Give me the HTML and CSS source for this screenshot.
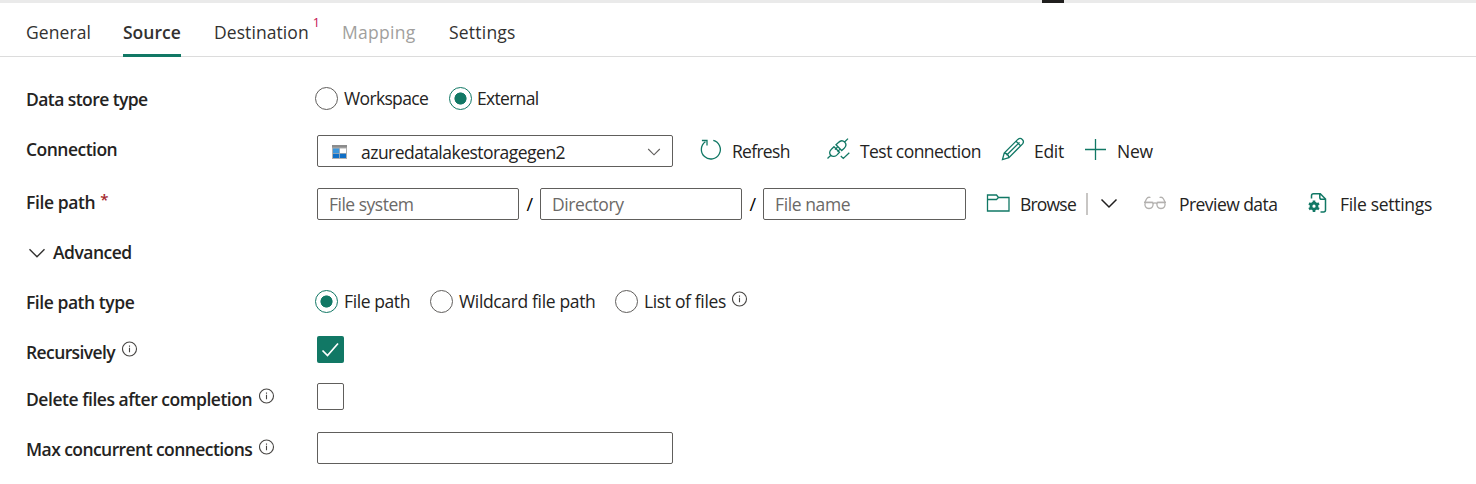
FILE: index.html
```html
<!DOCTYPE html>
<html lang="en">
<head>
<meta charset="utf-8">
<title>Copy data – Source</title>
<link rel="stylesheet" href="styles.css">
</head>
<body>
<div class="splitter"><span class="splitter-grip"></span></div>
<nav class="tabs">
  <a class="tab t-general">General</a>
  <a class="tab t-source active">Source</a>
  <a class="tab t-destination">Destination<sup class="tab-badge">1</sup></a>
  <a class="tab t-mapping disabled">Mapping</a>
  <a class="tab t-settings">Settings</a>
</nav>
<main class="form">
  <div class="row r-store">
    <div class="label"><span class="l-store">Data store type</span></div>
    <div class="radios">
      <label class="radio w-workspace"><i class="dot"></i><span>Workspace</span></label>
      <label class="radio w-external"><i class="dot on"></i><span>External</span></label>
    </div>
  </div>

  <div class="row r-conn">
    <div class="label up"><span class="l-conn">Connection</span></div>
    <div class="box select">
      <svg class="store-icon" width="15" height="14" viewBox="0 0 15 14"><path fill="#b0b0b0" d="M0 0h15v14H0z"/><path fill="#8c8c8c" d="M0 0h15v2.500H0z"/><path fill="#3a96dd" d="M1 3.500h6.200V8H1z"/><path fill="#fff" d="M8 3.500h6V8H8z"/><path fill="#0f6fc6" d="M1 8.700h6.200V13H1zM8 8.700h6V13H8z"/></svg>
      <span class="select-text">azuredatalakestoragegen2</span>
      <svg class="select-chevron" width="14" height="8" viewBox="0 0 14 8"><path d="M1.200 1 7 6.800 12.800 1" fill="none" stroke="#605e5c" stroke-width="1.100"/></svg>
    </div>
    <div class="commands">
      <span class="cmd c-refresh"><svg width="24" height="24" viewBox="0 0 24 24"><path d="M14.300 3.300A9.500 9.500 0 1 1 6.400 4.700M2.900 3.500H8V8.500" /></svg><span>Refresh</span></span>
      <span class="cmd c-test"><svg width="24" height="24" viewBox="0 0 24 24"><path d="M1.500 21.500 4.800 18.300M18.600 5 22 1.600M8 9.700 13.500 15.300 11.300 17.600C9.200 19.700 6.600 20.100 4.800 18.300 3 16.500 3.400 14 5.400 12.200ZM10 7.700 12.400 5.500C14.400 3.500 16.800 3.200 18.600 5 20.400 6.800 20.200 9.200 18.200 11.200L15.700 13.500ZM9 12.600 11.400 10.200M11.300 14.900 13.800 12.400M14.800 19 17.300 21.400 23.300 15.800"/></svg><span>Test connection</span></span>
      <span class="cmd c-edit"><svg width="24" height="24" viewBox="0 0 24 24"><path d="M1.500 22.500 3.200 16 16.800 2.400c3.200-2.700 7.200 1.300 4.800 4.500L7.900 20.600ZM3.200 16c2.600.3 4.300 2 4.700 4.600M5.500 18.300 18.500 5.400M15 4.200 19.800 9"/></svg><span>Edit</span></span>
      <span class="cmd c-new"><svg width="24" height="24" viewBox="0 0 24 24"><path d="M1 12.500h21M11.500 2v21"/></svg><span>New</span></span>
    </div>
  </div>

  <div class="row r-path">
    <div class="label up"><span class="l-path">File path</span><b class="required">*</b></div>
    <div class="paths">
      <div class="box path-input"><span class="p-system">File system</span></div><span class="slash">/</span>
      <div class="box path-input"><span class="p-dir">Directory</span></div><span class="slash">/</span>
      <div class="box path-input last"><span class="p-name">File name</span></div>
    </div>
    <div class="commands">
      <span class="cmd c-browse"><svg width="24" height="24" viewBox="0 0 24 24"><path d="M1.500 20V4h9l2 2.500h10.500V20ZM1.500 8.500h9l2-2"/></svg><span>Browse</span></span>
      <span class="divider"></span>
      <svg class="browse-chevron" width="18" height="11" viewBox="0 0 18 11"><path d="M1.500 1.500 9 9l7.500-7.500" fill="none" stroke="#201f1e" stroke-width="1.500"/></svg>
      <span class="cmd c-preview"><svg class="muted" width="24" height="24" viewBox="0 0 24 24"><path d="M7.500 6.500C5.500 5.800 4.300 6.500 3.500 8L2 11M16.500 6.500C18.500 5.800 19.700 6.500 20.500 8L22 11M1 11.300h8.500M14.500 11.300H23M10 12.800c1.200-1.300 2.800-1.300 4 0"/><path d="M2.200 11.500h7.600c1 3.500-.8 6-3.800 6s-4.800-2.500-3.800-6ZM14.200 11.500h7.600c1 3.500-.8 6-3.800 6s-4.800-2.500-3.800-6Z"/></svg><span>Preview data</span></span>
      <span class="cmd c-files"><svg width="24" height="24" viewBox="0 0 24 24"><path stroke-width="1.500" d="M4.500 7.500V4.800Q4.500 2.800 6.500 2.800h6.800l5.200 5.200V19q0 2-2 2H13.500M12.800 2.800V6.500q0 1.800 1.800 1.800H18.500"/><circle cx="7" cy="15.200" r="3" stroke-width="2.800"/><path stroke-width="2.600" d="M7 9.500v2.500M7 18.400v2.500M2 12.300l2.300 1.300M9.700 16.800l2.300 1.300M12 12.300l-2.300 1.300M4.300 16.800 2 18.100"/></svg><span>File settings</span></span>
    </div>
  </div>

  <div class="row r-adv">
    <svg class="adv-chevron" width="18" height="11" viewBox="0 0 18 11"><path d="M1.500 1.200 9 8.800l7.500-7.600" fill="none" stroke="#323130" stroke-width="1.400"/></svg>
    <span class="advanced">Advanced</span>
  </div>

  <div class="row r-type">
    <div class="label"><span class="l-type">File path type</span></div>
    <div class="radios">
      <label class="radio w-file"><i class="dot on"></i><span>File path</span></label>
      <label class="radio w-wild"><i class="dot"></i><span>Wildcard file path</span></label>
      <label class="radio w-list"><i class="dot"></i><span>List of files</span></label>
      <svg class="info" width="16" height="16" viewBox="0 0 16 16"><circle cx="7.500" cy="8" r="7"/><path d="M7.500 6.800V11.300M7.500 4.500v1.200"/></svg>
    </div>
  </div>

  <div class="row r-rec">
    <div class="label down"><span class="l-rec">Recursively</span><svg class="info" width="16" height="16" viewBox="0 0 16 16"><circle cx="7.500" cy="8" r="7"/><path d="M7.500 6.800V11.300M7.500 4.500v1.200"/></svg></div>
    <span class="check on"><svg width="27" height="27" viewBox="0 0 27 27"><path d="M5.500 14.500 10.500 19.500 21 7.500" fill="none" stroke="#fff" stroke-width="1.700"/></svg></span>
  </div>

  <div class="row r-del">
    <div class="label down"><span class="l-del">Delete files after completion</span><svg class="info" width="16" height="16" viewBox="0 0 16 16"><circle cx="7.500" cy="8" r="7"/><path d="M7.500 6.800V11.300M7.500 4.500v1.200"/></svg></div>
    <span class="check"></span>
  </div>

  <div class="row r-max">
    <div class="label down less"><span class="l-max">Max concurrent connections</span><svg class="info" width="16" height="16" viewBox="0 0 16 16"><circle cx="7.500" cy="8" r="7"/><path d="M7.500 6.800V11.300M7.500 4.500v1.200"/></svg></div>
    <div class="box wide"></div>
  </div>
</main>
</body>
</html>
```
FILE: styles.css
```css
* { box-sizing: border-box; }
body {
  margin: 0;
  background: #fff;
  color: #242322;
  font: 17.500px/24px "Open Sans", "Noto Sans", sans-serif;
  letter-spacing: -0.4px;
  white-space: nowrap;
  overflow: hidden;
}
svg { display: block; flex: none; }

.splitter { height: 3px; background: #eaeaea; padding-left: 1042px; }
.splitter-grip { display: block; width: 22px; height: 3px; background: #201f1e; }

.tabs { display: flex; height: 54px; padding-left: 26px; border-bottom: 1px solid #dcdcdc; }
.tab { height: 54px; padding-top: 17px; color: #323130; flex: none; letter-spacing: 0.08px; }
.t-general { width: 97px; }
.t-source { width: 58px; margin-right: 33px; }
.t-destination { width: 128px; }
.t-mapping { width: 107px; letter-spacing: 0.3px; }
.t-settings { letter-spacing: 0.22px; }
.tab.active { font-weight: 600; border-bottom: 3px solid #117865; letter-spacing: 0; }
.tab.disabled { color: #a19f9d; }
.tab-badge { font-size: 12.500px; line-height: 0; color: #c50f4f; margin-left: 4px; vertical-align: 12px; }

.form { padding: 18px 0 0 26px; }
.row { display: flex; align-items: center; }
.r-store { height: 50px; }
.r-conn { height: 52px; }
.r-path { height: 54px; }
.r-adv { height: 44px; }
.r-type { height: 54px; }
.r-rec { height: 41px; }
.r-del { height: 53px; }
.r-max { height: 50px; }

.label { display: flex; flex: none; width: 291px; font-weight: 600; letter-spacing: -0.52px; }
.label.up { padding-bottom: 4px; }
.label.down { padding-top: 5px; }
.label.less { padding-top: 2px; }
.r-store .label { padding-bottom: 2px; letter-spacing: -0.57px; }
.r-type .label { letter-spacing: -0.45px; }
.l-path { letter-spacing: -0.4px; }
.l-rec { letter-spacing: -0.6px; }
.l-del { letter-spacing: -0.47px; }
.l-max { letter-spacing: -0.57px; }
.required { color: #a4262c; font-size: 15px; font-weight: 600; margin-left: 5px; line-height: 19px; }
.info { fill: none; stroke: #484644; stroke-width: 1.1; margin: 1px 0 0 7px; }
.r-max .info { margin-top: 2px; }

.radios { display: flex; margin-left: -2px; padding-bottom: 1px; }
.r-store .radios { padding-bottom: 3px; }
.radio { display: flex; align-items: center; gap: 6px; flex: none; line-height: 23px; letter-spacing: -0.35px; }
.dot { width: 23px; height: 23px; flex: none; border: 1px solid #605e5c; border-radius: 50%; }
.dot.on { border-color: #117865; background: radial-gradient(circle, #117865 5.700px, transparent 6.400px); }
.w-workspace { width: 134px; letter-spacing: -0.65px; }
.w-external { gap: 5px; letter-spacing: -0.7px; }
.w-file { width: 115px; letter-spacing: -0.4px; }
.w-wild { width: 185px; }
.w-list { width: 110px; }

.box { display: flex; align-items: center; flex: none; height: 32px; border: 1px solid #605e5c; border-radius: 2px; }
.select, .wide { width: 356px; }
.select { padding: 2px 11px 0 14px; letter-spacing: -0.52px; }
.store-icon { margin-bottom: 1px; }
.select-text { margin-left: 14px; flex: 1; }
.paths { display: flex; align-items: center; flex: none; }
.path-input { width: 202px; padding: 0 0 0 11px; color: #6b6967; }
.path-input.last { width: 203px; }
.p-system { letter-spacing: -0.5px; }
.slash { width: 21px; text-align: center; color: #000; font-size: 18px; }

.commands { display: flex; align-items: center; }
.cmd { display: flex; align-items: center; flex: none; }
.cmd > svg { fill: none; stroke: #117865; stroke-width: 1.300; margin-bottom: 4px; }
.r-path .cmd > svg { margin-bottom: 2px; }
.cmd > svg.muted { stroke: #b3b1af; }
.cmd > span { margin-left: 9px; }
.c-refresh { margin-left: 26px; width: 127px; letter-spacing: -0.7px; }
.c-test { width: 175px; letter-spacing: -0.55px; }
.c-test > span { padding-left: 1px; }
.c-edit { width: 83px; letter-spacing: -0.3px; }
.c-new { letter-spacing: -0.3px; }
.c-browse { margin-left: 20px; width: 100px; letter-spacing: -0.8px; }
.c-browse > span { padding-left: 1px; }
.divider { width: 2px; height: 22px; background: #c8c6c4; }
.browse-chevron { margin: 0 25px 2px 12px; }
.c-preview { width: 164px; letter-spacing: -0.55px; }
.c-preview > span { padding-left: 3px; }
.c-files { letter-spacing: -0.3px; }

.adv-chevron { margin: 0 7px 0 2px; }
.advanced { font-weight: 600; letter-spacing: -0.52px; padding-bottom: 2px; }
.check { width: 27px; height: 27px; flex: none; border: 1px solid #605e5c; border-radius: 2px; }
.check.on { border: 0; background: #117865; }
```
